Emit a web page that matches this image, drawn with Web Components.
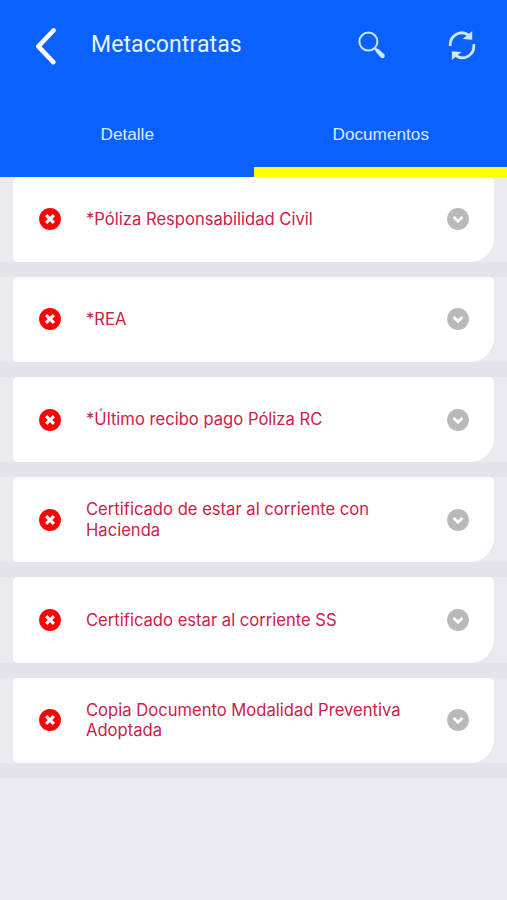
<!DOCTYPE html>
<html lang="es">
<head>
<meta charset="utf-8">
<meta name="viewport" content="width=device-width, initial-scale=1">
<title>Metacontratas</title>
<style>
  html, body {
    margin: 0;
    height: 100%;
    background: #ebeaf1;
    overflow: hidden;
  }
</style>
</head>
<body>
<app-screen>
  <app-header slot="header" label="Metacontratas">
    <app-tab>Detalle</app-tab>
    <app-tab active>Documentos</app-tab>
  </app-header>
  <doc-row>*Póliza Responsabilidad Civil</doc-row>
  <doc-row>*REA</doc-row>
  <doc-row>*Último recibo pago Póliza RC</doc-row>
  <doc-row>Certificado de estar al corriente con Hacienda</doc-row>
  <doc-row>Certificado estar al corriente SS</doc-row>
  <doc-row>Copia Documento Modalidad Preventiva Adoptada</doc-row>
</app-screen>

<script>
const ICONS = {
  back: `<svg width="24" height="40" viewBox="0 0 24 40"><path d="M19.5 5.5 4.3 21.4 19.3 37.2" fill="none" stroke="#fff" stroke-width="4.6" stroke-linecap="round" stroke-linejoin="round"/></svg>`,
  search: `<svg width="28" height="28" viewBox="0 0 28 28"><circle cx="10.4" cy="10.6" r="9" fill="none" stroke="#cfe6ff" stroke-width="2"/><path d="M16.8 17 19 19.2" stroke="#cfe6ff" stroke-width="2.2"/><path d="M17.3 20.3Q17.6 17.7 20.2 17.7L26.2 23.3Q27.6 25.2 26 26.6 24.4 27.8 22.8 26.4Z" fill="#cfe6ff"/></svg>`,
  // Dos arcos con punta triangular
  refresh: `<svg width="28" height="30" viewBox="0 0 28 30"><g fill="none" stroke="#cfe6ff" stroke-width="2.8"><path d="M2.3 16C1.4 4.6 13.5-.6 20.8 5.4"/><path d="M25.8 14.2C26.8 26.2 14.6 31.2 7.3 25.2"/></g><path d="M24.2 1V9.8L14.6 9Z" fill="#cfe6ff"/><path d="M3.9 30V21.2L13.5 22Z" fill="#cfe6ff"/></svg>`,
  error: `<svg width="22" height="22" viewBox="0 0 22 22"><circle cx="11" cy="11" r="10.9" fill="#fb0207"/><path d="M7.1 7.1 14.9 14.9M14.9 7.1 7.1 14.9" stroke="#fff" stroke-width="3.1"/></svg>`,
  down: `<svg width="22" height="22" viewBox="0 0 22 22"><circle cx="11" cy="11" r="10.9" fill="#b9b9b9"/><path d="M6.6 9.1 11 13.3 15.4 9.1" fill="none" stroke="#fff" stroke-width="2.8"/></svg>`,
};

class AppIcon extends HTMLElement {
  constructor() {
    super();
    this.attachShadow({ mode: "open" });
  }

  connectedCallback() {
    this.shadowRoot.innerHTML = `
      <style>
        :host { display: inline-flex; flex: none; }
        svg { display: block; }
      </style>
      ${ICONS[this.getAttribute("name")] || ""}
    `;
  }
}

class AppTab extends HTMLElement {
  constructor() {
    super();
    this.attachShadow({ mode: "open" });
    this.shadowRoot.innerHTML = `
      <style>
        :host {
          box-sizing: border-box;
          display: flex;
          flex: 1;
          justify-content: center;
          padding: 34px 0 0 1px;
          border-bottom: 10px solid transparent;
          color: #d9ebff;
          font: 17.2px/20px "Liberation Sans", Arial, sans-serif;
        }
        :host([active]) { border-bottom-color: #ff0; }
      </style>
      <slot></slot>
    `;
  }
}

class AppHeader extends HTMLElement {
  constructor() {
    super();
    this.attachShadow({ mode: "open" });
    this.shadowRoot.innerHTML = `
      <style>
        :host {
          display: flex;
          flex-direction: column;
          height: 176.6px;
          background: #0961ff;
        }
        .bar {
          display: flex;
          align-items: center;
          height: 90px;
          padding: 0 31px 0 34px;
        }
        h1 {
          flex: 1;
          margin: 0 0 0 33px;
          color: #e6f4ff;
          font: 400 23px/28px Roboto, sans-serif;
          letter-spacing: 0.1px;
        }
        .search { margin-right: 62px; }
        .tabs { display: flex; flex: 1; }
      </style>
      <div class="bar">
        <app-icon name="back"></app-icon>
        <h1></h1>
        <app-icon class="search" name="search"></app-icon>
        <app-icon name="refresh"></app-icon>
      </div>
      <div class="tabs"><slot></slot></div>
    `;
  }

  connectedCallback() {
    this.shadowRoot.querySelector("h1").textContent = this.getAttribute("label");
  }
}

class DocRow extends HTMLElement {
  constructor() {
    super();
    this.attachShadow({ mode: "open" });
    this.shadowRoot.innerHTML = `
      <style>
        :host {
          display: block;
          padding: 0 13px;
          border-bottom: 15px solid #e5e4ec;
        }
        .card {
          box-sizing: border-box;
          display: flex;
          align-items: center;
          height: 85.2px;
          padding: 0 25px 0 26px;
          border-radius: 5px 5px 24px 5px;
          background: #fff;
        }
        .label {
          flex: 1;
          margin: 0 24px 0 25px;
          color: #cc2149;
          font: 400 16.6px/20.4px Inter, sans-serif;
        }
      </style>
      <div class="card">
        <app-icon name="error"></app-icon>
        <div class="label"><slot></slot></div>
        <app-icon name="down"></app-icon>
      </div>
    `;
  }
}

class AppScreen extends HTMLElement {
  constructor() {
    super();
    this.attachShadow({ mode: "open" });
    this.shadowRoot.innerHTML = `
      <style>
        :host { display: block; height: 100%; }
      </style>
      <slot name="header"></slot>
      <main><slot></slot></main>
    `;
  }
}

customElements.define("app-icon", AppIcon);
customElements.define("app-tab", AppTab);
customElements.define("app-header", AppHeader);
customElements.define("doc-row", DocRow);
customElements.define("app-screen", AppScreen);
</script>
</body>
</html>
